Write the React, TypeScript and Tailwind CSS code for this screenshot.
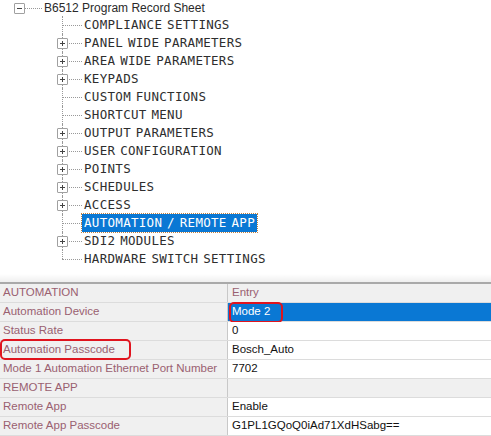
import React from 'react';

interface TreeItem {
  label: string;
  expandable: boolean;
  selected?: boolean;
}

const items: TreeItem[] = [
  { label: 'COMPLIANCE SETTINGS', expandable: false },
  { label: 'PANEL WIDE PARAMETERS', expandable: true },
  { label: 'AREA WIDE PARAMETERS', expandable: true },
  { label: 'KEYPADS', expandable: true },
  { label: 'CUSTOM FUNCTIONS', expandable: false },
  { label: 'SHORTCUT MENU', expandable: false },
  { label: 'OUTPUT PARAMETERS', expandable: true },
  { label: 'USER CONFIGURATION', expandable: true },
  { label: 'POINTS', expandable: true },
  { label: 'SCHEDULES', expandable: true },
  { label: 'ACCESS', expandable: true },
  { label: 'AUTOMATION / REMOTE APP', expandable: false, selected: true },
  { label: 'SDI2 MODULES', expandable: true },
  { label: 'HARDWARE SWITCH SETTINGS', expandable: false },
];

interface Row {
  label: string;
  value: string;
  section?: boolean;
  selected?: boolean;
  markLabel?: boolean;
}

const rows: Row[] = [
  { label: 'AUTOMATION', value: 'Entry', section: true },
  { label: 'Automation Device', value: 'Mode 2', selected: true },
  { label: 'Status Rate', value: '0' },
  { label: 'Automation Passcode', value: 'Bosch_Auto', markLabel: true },
  { label: 'Mode 1 Automation Ethernet Port Number', value: '7702' },
  { label: 'REMOTE APP', value: '', section: true },
  { label: 'Remote App', value: 'Enable' },
  { label: 'Remote App Passcode', value: 'G1PL1GQoQ0iAd71XdHSabg==' },
];

function Expander({ sign }: { sign: '+' | '-' }) {
  return (
    <div className="w-[11px] h-[11px] border border-[#a0a0a0] rounded-[1px] bg-white flex items-center justify-center relative z-10">
      <div className="relative w-[5px] h-[5px]">
        <div className="absolute left-0 right-0 top-[2px] h-px bg-[#444]" />
        {sign === '+' && <div className="absolute top-0 bottom-0 left-[2px] w-px bg-[#444]" />}
      </div>
    </div>
  );
}

export default function App() {
  return (
    <div className="w-[491px] h-[436px] bg-white overflow-hidden flex flex-col" style={{ fontFamily: '"Liberation Sans", Arial, sans-serif' }}>
      {/* Tree */}
      <div>
        <div className="h-[16px] flex items-center">
          <div className="w-[14px]" />
          <Expander sign="-" />
          <div className="w-[17px] border-t border-dotted border-[#999]" />
          <span
            className="ml-[2px] text-[12px] text-[#2a2a2a]"
            style={{ fontFamily: '"Liberation Sans Narrow", "Liberation Sans", Arial, sans-serif' }}
          >
            B6512 Program Record Sheet
          </span>
        </div>
        {items.map((item, i) => {
          const last = i === items.length - 1;
          return (
            <div key={item.label} className="h-[18px] flex items-center">
              <div className="w-[57px]" />
              <div className="relative w-[25px] h-full flex items-center">
                <div className={`absolute left-[5px] top-0 border-l border-dotted border-[#999] ${last ? 'h-[9px]' : 'h-full'}`} />
                <div className="absolute left-[5px] right-0 top-[9px] border-t border-dotted border-[#999]" />
                {item.expandable && <Expander sign="+" />}
              </div>
              <span
                className={`px-[2px] h-[18px] flex items-center text-[12.5px] tracking-[0.3px] [word-spacing:-3px] font-[DejaVu_Sans_Mono,monospace] ${
                  item.selected ? 'bg-[#0a78d4] text-white outline outline-1 outline-dotted outline-[#c08040]' : 'text-[#2e2e2e]'
                }`}
              >
                {item.label}
              </span>
            </div>
          );
        })}
      </div>

      <div className="mt-[6px] h-[9px] bg-gradient-to-b from-white to-[#efefef]" />
      <div className="h-[2px] bg-[#a9a9a9]" />

      {/* Property grid */}
      <div className="flex-1 text-[11.5px]">
        {rows.map((row) => (
          <div key={row.label} className="h-[19px] shrink-0 flex border-b border-[#dcdcdc]">
            <div className="w-[228px] shrink-0 bg-[#f0f0f0] border-r border-[#c8c8c8] flex items-center relative">
              <span className="pl-[3px] text-[#9a6070]">{row.label}</span>
              {row.markLabel && (
                <div className="absolute left-0 top-[-2px] w-[131px] h-[21px] border-2 border-[#e0141e] rounded-[5px]" />
              )}
            </div>
            <div
              className={`flex-1 flex items-center relative ${
                row.selected ? 'bg-[#0a78d4] text-white' : row.section ? 'bg-[#f0f0f0]' : 'bg-white text-[#111]'
              }`}
            >
              <span className={`pl-[4px] ${row.section ? 'text-[#9a6070]' : ''}`}>{row.value}</span>
              {row.selected && (
                <div className="absolute left-[1px] top-[-1px] w-[54px] h-[21px] border-2 border-[#e0141e] rounded-[5px]" />
              )}
            </div>
          </div>
        ))}
      </div>
    </div>
  );
}
